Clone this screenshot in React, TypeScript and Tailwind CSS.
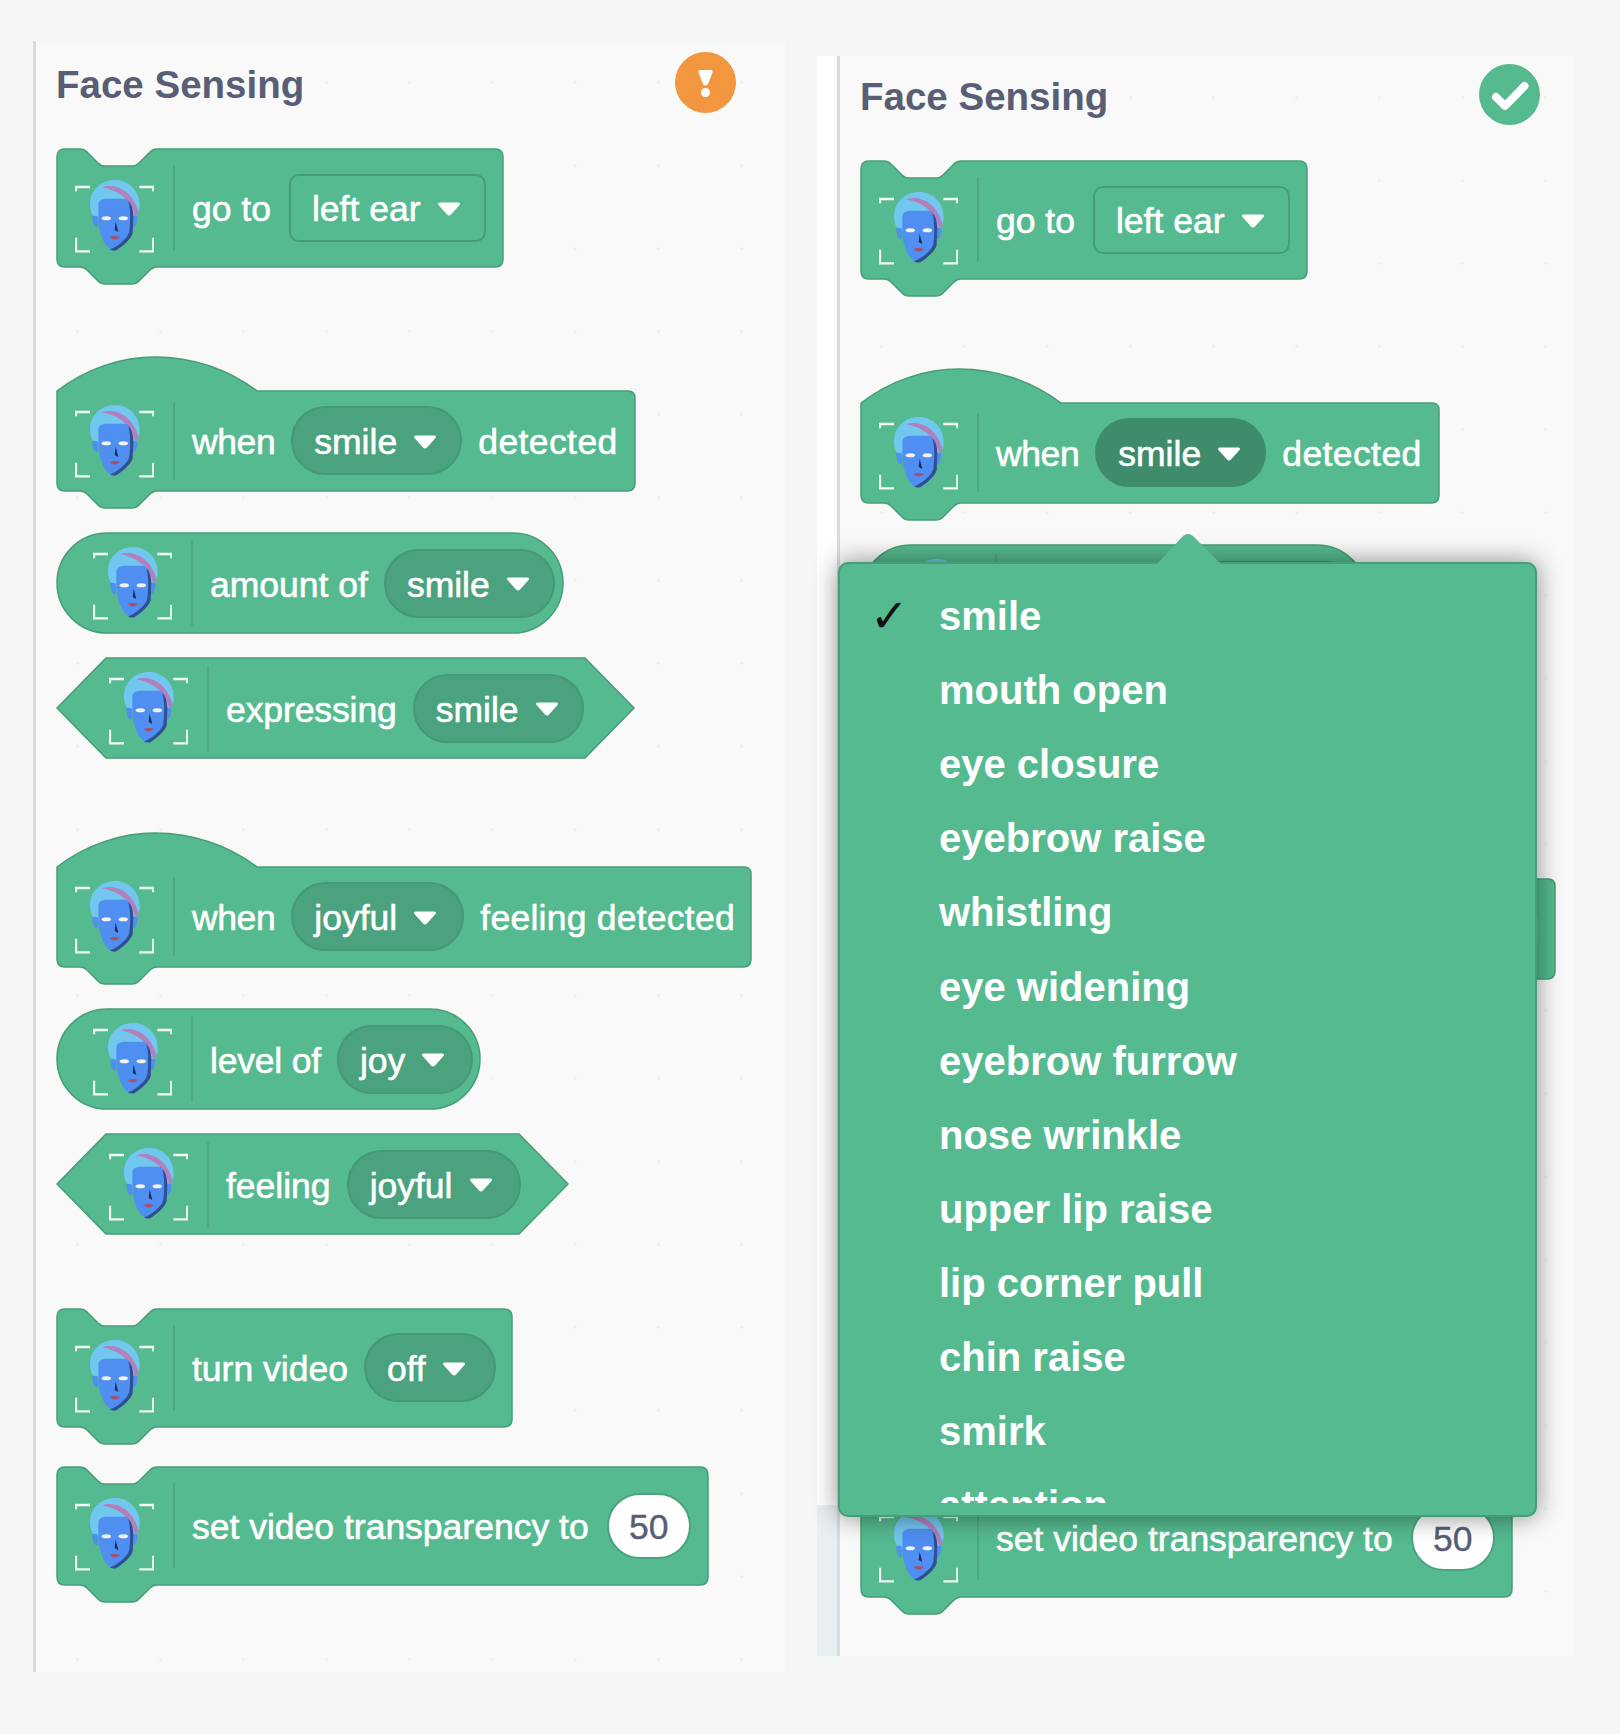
import React from "react";

const GREEN = "#55ba8f";
const EDGE = "#479d79";

type Kind = "stack" | "hat" | "reporter" | "boolean";

const notchBottom = (H: number) =>
  `L100 ${H} Q96 ${H} 93 ${H + 3} L82 ${H + 14} Q79 ${H + 17} 75 ${H + 17} L48 ${H + 17} Q44 ${H + 17} 41 ${H + 14} L30 ${H + 3} Q27 ${H} 23 ${H}`;

function shapePath(kind: Kind, W: number): string {
  if (kind === "stack") {
    const H = 118;
    return `M0 8 Q0 0 8 0 L23 0 Q27 0 30 3 L41 14 Q44 17 48 17 L75 17 Q79 17 82 14 L93 3 Q96 0 100 0 L${W - 8} 0 Q${W} 0 ${W} 8 L${W} ${H - 8} Q${W} ${H} ${W - 8} ${H} ${notchBottom(H)} L8 ${H} Q0 ${H} 0 ${H - 8} Z`;
  }
  if (kind === "hat") {
    const H = 134;
    return `M0 34 C30 11 65 0 98 0 C135 0 171 12 200 34 L${W - 7} 34 Q${W} 34 ${W} 41 L${W} ${H - 8} Q${W} ${H} ${W - 8} ${H} ${notchBottom(H)} L8 ${H} Q0 ${H} 0 ${H - 8} Z`;
  }
  if (kind === "reporter") {
    return `M50 0 L${W - 50} 0 A50 50 0 0 1 ${W - 50} 100 L50 100 A50 50 0 0 1 50 0 Z`;
  }
  return `M49 0 L${W - 49} 0 L${W} 50 L${W - 49} 100 L49 100 L0 50 Z`;
}

function FaceIcon() {
  return (
    <svg viewBox="45 30 237 219" className="w-[79px] h-[73px] shrink-0" aria-hidden="true">
      <path d="M48 64 V51 H90 M238 51 H280 V64 M48 203 V244 H90 M280 203 V244 H238" fill="none" stroke="#f1faf6" strokeWidth="7" />
      <path d="M90 110 C86 60 125 30 165 30 C206 30 241 62 239 112 C237 130 226 145 214 150 H115 C102 146 92 130 90 110 Z" fill="#72c7ee" />
      <path d="M126 52 C160 40 216 55 236 128 L226 140 C214 88 178 62 126 52 Z" fill="#b37fbd" />
      <path d="M97 142 C97 136 106 136 114 140 L114 172 C105 174 98 166 97 142 Z M232 142 C232 136 223 136 216 140 L216 172 C225 174 231 166 232 142 Z" fill="#4f8ff2" />
      <path d="M115 104 C115 92 126 86 140 86 H196 C206 86 214 100 217 130 L217 185 C216 195 202 215 182 232 C168 243 155 243 147 235 C128 220 116 180 115 150 Z" fill="#4f8ff2" />
      <path d="M205 94 C213 100 219 114 220 136 L218 190 C214 205 190 228 170 240 C164 243 156 242 150 238 C172 230 204 205 208 185 C212 150 212 120 205 94 Z" fill="#2f4f91" />
      <ellipse cx="139" cy="145" rx="14" ry="6" fill="#f4f2ee" />
      <ellipse cx="190" cy="145" rx="14" ry="6" fill="#f4f2ee" />
      <path d="M167 155 L175 186 L164 180 Z" fill="#1f2c55" />
      <path d="M149 201 C158 197 170 197 180 201 C172 211 156 211 149 201 Z" fill="#a8506b" />
    </svg>
  );
}

function Divider({ tall }: { tall?: boolean }) {
  return <div className={tall ? "w-[2px] h-[85px] bg-[#4ea884] shrink-0 ml-[19px] mr-[17px]" : "w-[2px] h-[78px] bg-[#4ea884] shrink-0 ml-[19px] mr-[17px]"} />;
}

function Word({ children, spacing = "" }: { children: React.ReactNode; spacing?: string }) {
  return <span className={`block pt-[5px] text-[35.5px] leading-none text-white whitespace-nowrap [-webkit-text-stroke:0.6px_white] ${spacing}`}>{children}</span>;
}

function Arrow() {
  return (
    <svg viewBox="0 0 24 16" className="w-[24px] h-[16px] mt-[2px] shrink-0" aria-hidden="true">
      <path d="M3 1.5 H21 Q24 1.5 22.5 4 L14 13.5 Q12 15.5 10 13.5 L1.5 4 Q0 1.5 3 1.5 Z" fill="#fff" />
    </svg>
  );
}

function Pill({ label, dark, widthClass }: { label: string; dark?: boolean; widthClass: string }) {
  return (
    <div className={`${dark ? "bg-[#3f8c6c] border-[#3f8c6c]" : "bg-[#4ba27e] border-[#46987a]"} ${widthClass} flex items-center h-[69px] pl-[21px] gap-[16px] rounded-full border-2 shrink-0`}>
      <Word>{label}</Word>
      <Arrow />
    </div>
  );
}

function Square({ label }: { label: string }) {
  return (
    <div className="flex items-center h-[68px] w-[197px] pl-[21px] gap-[16px] rounded-[10px] border-2 border-[#479d79] shrink-0">
      <Word>{label}</Word>
      <Arrow />
    </div>
  );
}

const outer: Record<Kind, string> = {
  stack: "relative h-[135px] shrink-0",
  hat: "relative h-[153px] pt-[34px] shrink-0",
  reporter: "relative h-[102px] shrink-0",
  boolean: "relative h-[102px] shrink-0",
};
const inner: Record<Kind, string> = {
  stack: "relative flex items-center h-[119px] pl-[19px]",
  hat: "relative flex items-center h-[101px] pl-[19px]",
  reporter: "relative flex items-center h-[102px] pl-[37px]",
  boolean: "relative flex items-center h-[102px] pl-[53px]",
};
const iconWrap: Record<Kind, string> = {
  stack: "mt-[17px] shrink-0",
  hat: "mt-[2px] shrink-0",
  reporter: "shrink-0",
  boolean: "shrink-0",
};

function Block({ kind, w, widthClass, gapClass, children }: { kind: Kind; w: number; widthClass: string; gapClass: string; children: React.ReactNode }) {
  return (
    <div className={`${outer[kind]} ${widthClass}`}>
      <svg className="absolute inset-0 w-full h-full overflow-visible" aria-hidden="true">
        <path d={shapePath(kind, w - 2)} transform="translate(1 1)" fill={GREEN} stroke={EDGE} strokeWidth="1.5" />
      </svg>
      <div className={inner[kind]}>
        <div className={iconWrap[kind]}>
          <FaceIcon />
        </div>
        <Divider tall={kind !== "hat"} />
        <div className={`flex items-center ${gapClass}`}>{children}</div>
      </div>
    </div>
  );
}

function Blocks({ darkSmile }: { darkSmile?: boolean }) {
  return (
    <div className="flex flex-col gap-[23px]">
      <Block kind="stack" w={448} widthClass="w-[448px]" gapClass="gap-[18px]">
        <Word>go to</Word>
        <Square label="left ear" />
      </Block>
      <div className="mt-[50px]">
        <Block kind="hat" w={580} widthClass="w-[580px]" gapClass="gap-[16px]">
          <Word spacing="tracking-[-0.4px]">when</Word>
          <Pill label="smile" dark={darkSmile} widthClass="w-[171px]" />
          <Word spacing="tracking-[0.4px]">detected</Word>
        </Block>
      </div>
      <Block kind="reporter" w={508} widthClass="w-[508px]" gapClass="gap-[16px]">
        <Word>amount of</Word>
        <Pill label="smile" widthClass="w-[171px]" />
      </Block>
      <Block kind="boolean" w={579} widthClass="w-[579px]" gapClass="gap-[16px]">
        <Word spacing="tracking-[-0.1px]">expressing</Word>
        <Pill label="smile" widthClass="w-[171px]" />
      </Block>
      <div className="mt-[50px]">
        <Block kind="hat" w={696} widthClass="w-[696px]" gapClass="gap-[16px]">
          <Word spacing="tracking-[-0.4px]">when</Word>
          <Pill label="joyful" widthClass="w-[173px]" />
          <Word spacing="tracking-[0.25px]">feeling detected</Word>
        </Block>
      </div>
      <Block kind="reporter" w={425} widthClass="w-[425px]" gapClass="gap-[16px]">
        <Word spacing="tracking-[-0.2px]">level of</Word>
        <Pill label="joy" widthClass="w-[136px]" />
      </Block>
      <Block kind="boolean" w={513} widthClass="w-[513px]" gapClass="gap-[16px]">
        <Word>feeling</Word>
        <Pill label="joyful" widthClass="w-[174px]" />
      </Block>
      <div className="mt-[50px]">
        <Block kind="stack" w={457} widthClass="w-[457px]" gapClass="gap-[16px]">
          <Word>turn video</Word>
          <Pill label="off" widthClass="w-[132px]" />
        </Block>
      </div>
      <Block kind="stack" w={653} widthClass="w-[653px]" gapClass="gap-[18px]">
        <Word>set video transparency to</Word>
        <div className="flex items-center justify-center w-[84px] h-[66px] rounded-full bg-white border-2 border-[#4ba27e] shrink-0">
          <span className="block pt-[4px] text-[35.5px] leading-none text-[#575e75] [-webkit-text-stroke:0.4px_#575e75]">50</span>
        </div>
      </Block>
    </div>
  );
}

function Warning() {
  return (
    <svg viewBox="0 0 61 61" className="w-[61px] h-[61px]" aria-hidden="true">
      <circle cx="30.5" cy="30.5" r="30.5" fill="#f2963f" />
      <path d="M25 18 H36 Q38 18 37.5 20.5 L33 32 Q30.5 35 28 32 L23.5 20.5 Q23 18 25 18 Z" fill="#fff" />
      <circle cx="30.5" cy="40.5" r="4.5" fill="#fff" />
    </svg>
  );
}

function Check() {
  return (
    <svg viewBox="0 0 61 61" className="w-[61px] h-[61px]" aria-hidden="true">
      <circle cx="30.5" cy="30.5" r="30.5" fill="#55ba8f" />
      <path d="M17 33 L26 42 L45.5 22" fill="none" stroke="#fff" strokeWidth="8" strokeLinecap="round" strokeLinejoin="round" />
    </svg>
  );
}

function Content({ badge, darkSmile, topClass }: { badge: React.ReactNode; darkSmile?: boolean; topClass: string }) {
  return (
    <div className={`w-[680px] ml-[20px] ${topClass}`}>
      <div className="flex items-center justify-between h-[61px] mb-[35px]">
        <h2 className="text-[38.5px] leading-none font-bold text-[#575e75] pt-[6px]">Face Sensing</h2>
        {badge}
      </div>
      <Blocks darkSmile={darkSmile} />
    </div>
  );
}

const menu = ["smile", "mouth open", "eye closure", "eyebrow raise", "whistling", "eye widening", "eyebrow furrow", "nose wrinkle", "upper lip raise", "lip corner pull", "chin raise", "smirk", "attention"];

function Popup() {
  return (
    <div className="absolute left-[21px] top-[506px] w-[699px] h-[955px] rounded-[10px] bg-[#55ba8f] border-2 border-[#479d79] shadow-[0_0_26px_rgba(0,0,0,0.45)]">
      <svg viewBox="0 0 66 32" className="absolute left-[316px] top-[-31px] w-[66px] h-[32px]" aria-hidden="true">
        <path d="M0 32 L27 3 Q32 -1 37 3 L66 32 Z" fill="#55ba8f" />
      </svg>
      <div className="h-[939px] overflow-hidden pt-[15px] pl-[30px]">
        {menu.map((m, i) => (
          <div key={m} className="flex items-center h-[74.1px] text-white">
            <span className="w-[69px] text-[46px] leading-none text-[#111] font-['DejaVu_Sans',sans-serif]">{i === 0 ? "✓" : ""}</span>
            <span className="text-[40px] leading-none font-bold whitespace-nowrap">{m}</span>
          </div>
        ))}
      </div>
    </div>
  );
}

const dots = "bg-[radial-gradient(circle,#eeeeee_1px,transparent_1.5px)] bg-[size:83px_83px]";

export default function App() {
  return (
    <div className="w-[1620px] h-[1734px] bg-[#f5f7f7] flex items-start font-['Liberation_Sans',Arial,sans-serif] overflow-hidden">
      <div className={`ml-[33px] mt-[41px] w-[752px] h-[1631px] bg-[#f9f9f9] ${dots} border-l-[3px] border-[#dcdcdc] shrink-0`}>
        <Content badge={<Warning />} topClass="pt-[11px]" />
      </div>
      <div className="relative ml-[32px] mt-[56px] flex h-[1600px] w-[758px] shrink-0">
        <div className="flex flex-col w-[20px] shrink-0">
          <div className="flex-1 bg-white" />
          <div className="h-[151px] bg-[#e9eef2]" />
        </div>
        <div className={`flex-1 bg-[#f9f9f9] ${dots} border-l-[3px] border-[#dcdcdc]`}>
          <Content badge={<Check />} darkSmile topClass="pt-[8px]" />
        </div>
        <Popup />
      </div>
    </div>
  );
}
